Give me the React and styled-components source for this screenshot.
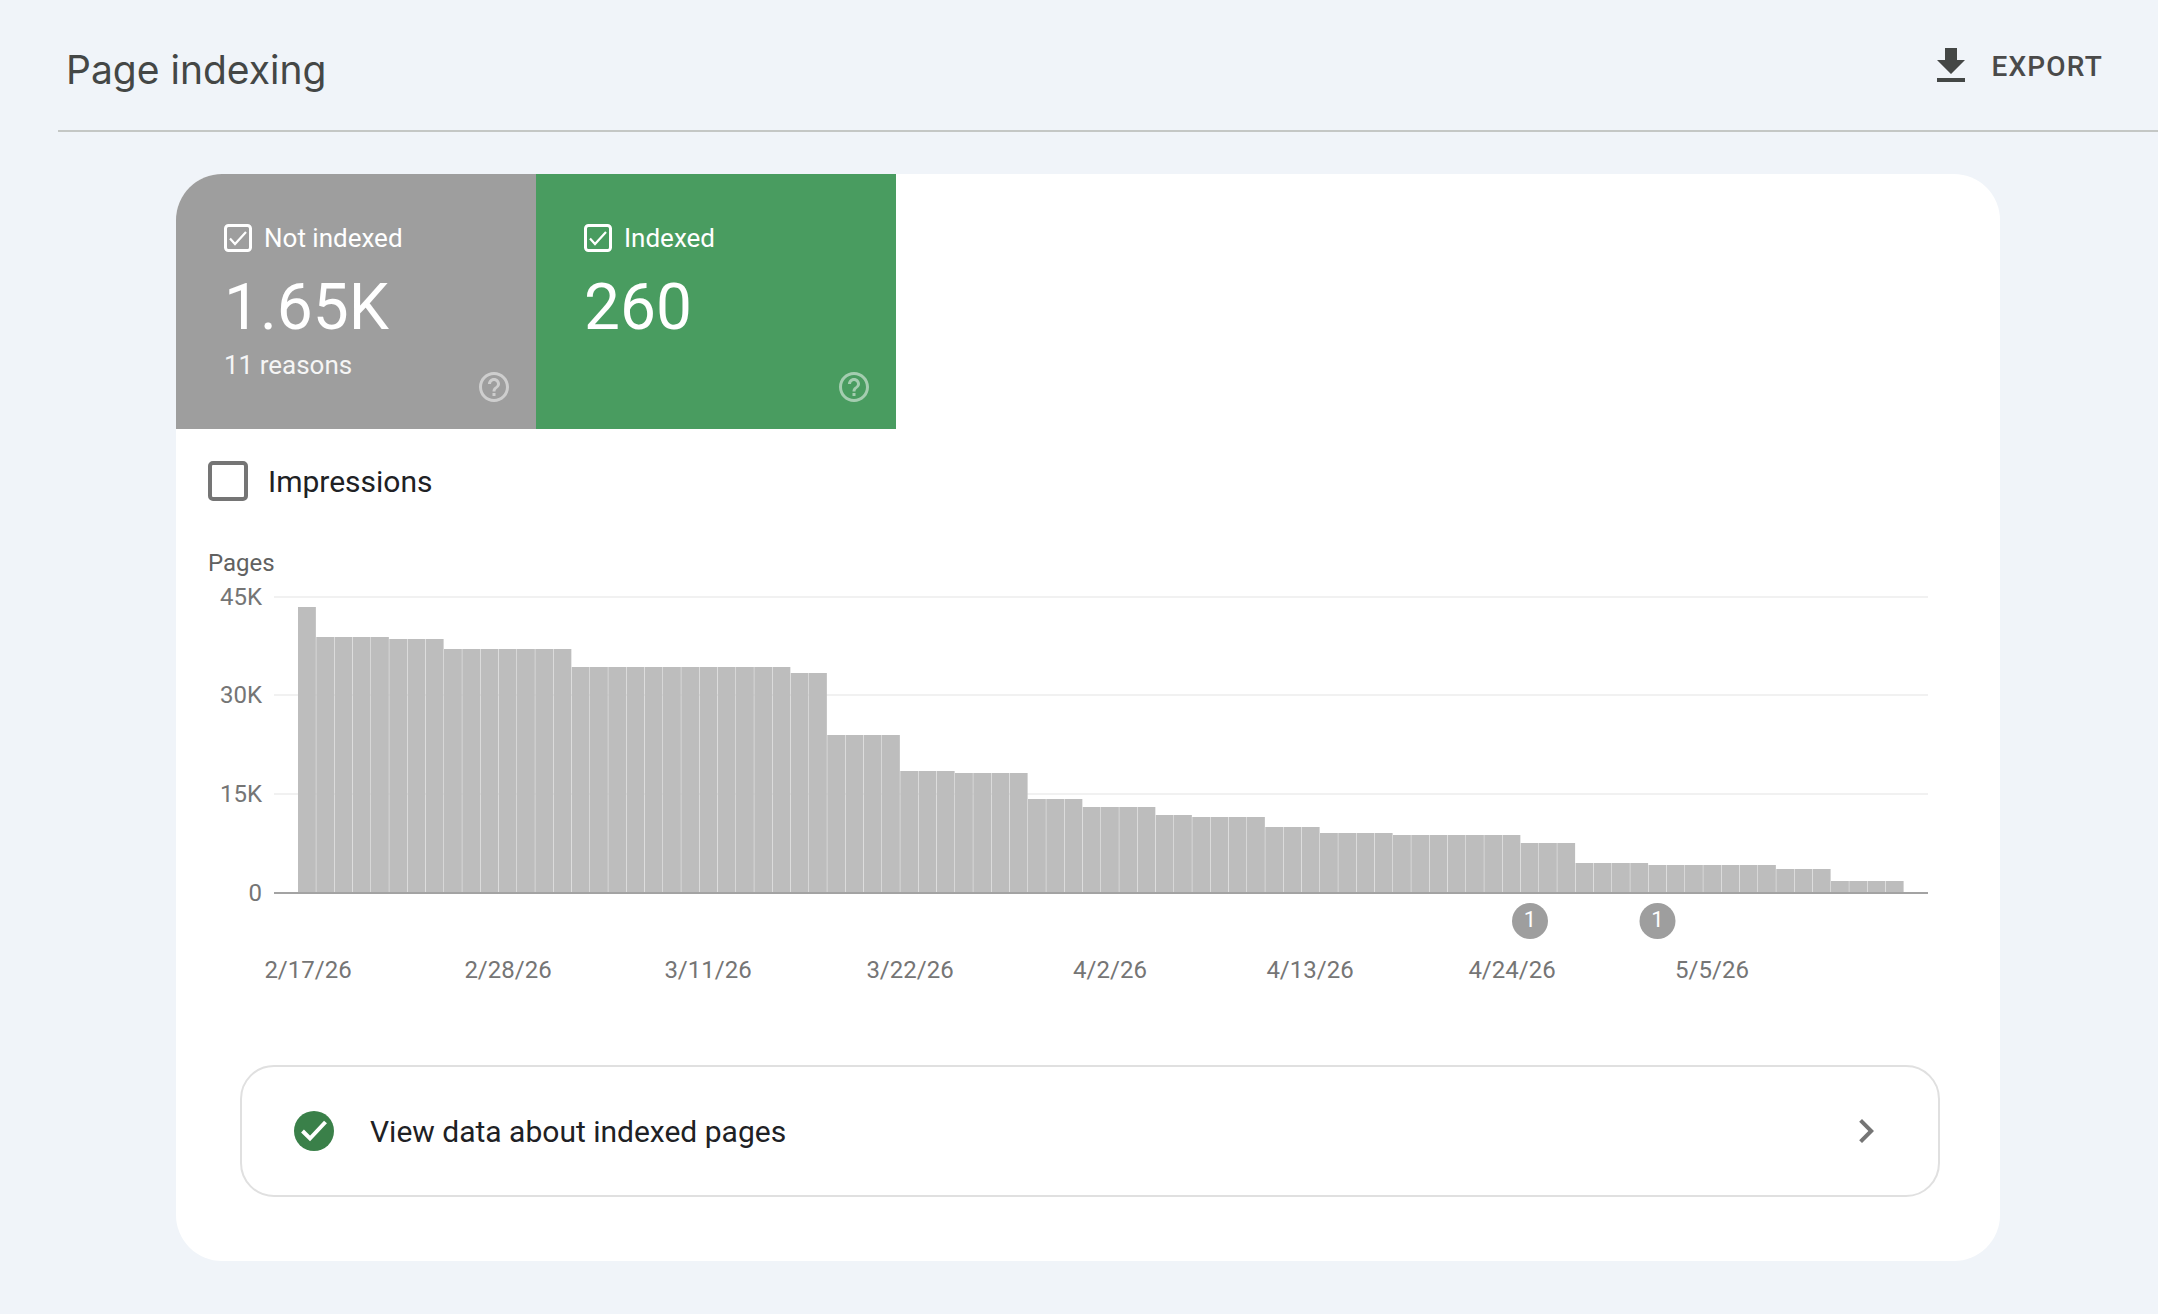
import styled, { createGlobalStyle } from "styled-components";

const GlobalStyle = createGlobalStyle`
  html, body {
    margin: 0;
    padding: 0;
    background: #f0f4f9;
    font-family: Roboto, "Liberation Sans", sans-serif;
  }
`;

// [number of days, y of bar top]
const barRuns = [
  [1, 607], [4, 637], [3, 639], [7, 649], [12, 667], [2, 673], [4, 735],
  [3, 771], [4, 773], [3, 799], [4, 807], [2, 815], [4, 817], [3, 827],
  [4, 833], [7, 835], [3, 843], [4, 863], [7, 865], [3, 869], [4, 881],
];
const bars = barRuns.flatMap(([n, top]) => Array(n).fill(top));

const BAR_LEFT = 298;
const BAR_STEP = 18.25;
const BASE_Y = 892;

const yTicks = [
  { label: "45K", y: 597 },
  { label: "30K", y: 695 },
  { label: "15K", y: 794 },
];
const xTicks = [
  { label: "2/17/26", x: 308 },
  { label: "2/28/26", x: 508 },
  { label: "3/11/26", x: 708 },
  { label: "3/22/26", x: 910 },
  { label: "4/2/26", x: 1110 },
  { label: "4/13/26", x: 1310 },
  { label: "4/24/26", x: 1512 },
  { label: "5/5/26", x: 1712 },
];
const pins = [1530, 1657.5];

const Page = styled.div`
  width: 2158px;
  height: 1314px;
  overflow: hidden;
`;

const Header = styled.header`
  height: 128px;
  margin-left: 58px;
  display: flex;
  align-items: center;
  justify-content: space-between;
  border-bottom: 2px solid #c4c7c5;
  padding: 2px 55px 0 8px;
  box-sizing: content-box;
`;

const Title = styled.h1`
  margin: 6px 0 0;
  font-family: Inter, Roboto, sans-serif;
  font-size: 39px;
  font-weight: 400;
  color: #444746;
`;

const ExportButton = styled.button`
  display: flex;
  align-items: center;
  gap: 16px;
  border: 0;
  background: none;
  padding: 0;
  font-family: Roboto, sans-serif;
  font-size: 28px;
  font-weight: 500;
  letter-spacing: 1.2px;
  color: #4a4a4a;
`;

const Card = styled.main`
  width: 1824px;
  height: 1087px;
  margin: 42px 0 0 176px;
  background: #fff;
  border-radius: 46px;
  overflow: hidden;
`;

const Tiles = styled.div`
  display: flex;
`;

const Tile = styled.div`
  position: relative;
  width: 360px;
  height: 255px;
  box-sizing: border-box;
  padding: 50px 0 0 48px;
  background: ${(props) => props.color};
  color: #fff;
`;

const TileLabel = styled.div`
  display: flex;
  align-items: center;
  gap: 12px;
  height: 28px;
  font-size: 26px;
`;

const TileValue = styled.div`
  margin-top: 20px;
  font-size: 64px;
  line-height: 72px;
`;

const TileNote = styled.div`
  margin-top: 6px;
  font-size: 26px;
  line-height: 30px;
  opacity: 0.9;
`;

const HelpIcon = styled.svg`
  position: absolute;
  right: 24px;
  bottom: 24px;
  width: 36px;
  height: 36px;
  fill: #fff;
  opacity: 0.5;
`;

const MetricRow = styled.label`
  display: flex;
  align-items: center;
  gap: 20px;
  margin: 32px 0 0 32px;
  height: 40px;
  font-size: 30px;
  color: #202124;
`;

const MetricBox = styled.span`
  width: 40px;
  height: 40px;
  box-sizing: border-box;
  border: 4px solid #757575;
  border-radius: 5px;
`;

const ChartSvg = styled.svg`
  display: block;
  width: 1824px;
  height: 460px;
  margin-top: 39px;
`;

const ChartText = styled.text`
  font-family: Roboto, sans-serif;
  font-size: 24px;
  fill: ${(props) => props.color || "#757575"};
`;

const PinText = styled.text`
  font-family: Roboto, sans-serif;
  font-size: 22px;
  fill: #fff;
`;

const LinkBox = styled.a`
  display: flex;
  align-items: center;
  width: 1700px;
  height: 132px;
  box-sizing: border-box;
  margin: 65px 0 0 64px;
  padding: 0 48px 0 52px;
  border: 2px solid #e0e0e0;
  border-radius: 34px;
  font-size: 30px;
  color: #202124;
`;

const LinkLabel = styled.span`
  flex: 1;
  margin-left: 36px;
`;

function TileCheck() {
  return (
    <svg width="28" height="28" viewBox="0 0 28 28" fill="none" stroke="#fff">
      <rect x="1.5" y="1.5" width="25" height="25" rx="3" strokeWidth="3" />
      <path d="M6 14.5l5 5.5 11-12" strokeWidth="2.2" />
    </svg>
  );
}

function Help() {
  return (
    <HelpIcon viewBox="0 0 24 24">
      <path d="M11 18h2v-2h-2v2zm1-16C6.48 2 2 6.48 2 12s4.48 10 10 10 10-4.48 10-10S17.52 2 12 2zm0 18c-4.41 0-8-3.59-8-8s3.59-8 8-8 8 3.59 8 8-3.59 8-8 8zm0-14c-2.21 0-4 1.79-4 4h2c0-1.1.9-2 2-2s2 .9 2 2c0 2-3 1.75-3 5h2c0-2.25 3-2.5 3-5 0-2.21-1.79-4-4-4z" />
    </HelpIcon>
  );
}

function Chart() {
  return (
    <ChartSvg viewBox="176 540 1824 460">
      <ChartText x="208" y="571" color="#616161">Pages</ChartText>
      {yTicks.map((t) => (
        <g key={t.label}>
          <rect x="274" y={t.y - 1} width="1654" height="2" fill="#f1f1f1" />
          <ChartText x="262" y={t.y + 8} textAnchor="end">{t.label}</ChartText>
        </g>
      ))}
      <ChartText x="262" y="901" textAnchor="end">0</ChartText>
      {bars.map((top, i) => (
        <rect
          key={i}
          x={BAR_LEFT + i * BAR_STEP}
          y={top}
          width={BAR_STEP - 0.4}
          height={BASE_Y - top}
          fill="#bdbdbd"
        />
      ))}
      <rect x="274" y="892" width="1654" height="2" fill="#a3a3a3" />
      {pins.map((x) => (
        <g key={x}>
          <circle cx={x} cy="921" r="18" fill="#9e9e9e" />
          <PinText x={x} y="927" textAnchor="middle">1</PinText>
        </g>
      ))}
      {xTicks.map((t) => (
        <ChartText key={t.label} x={t.x} y="978" textAnchor="middle">{t.label}</ChartText>
      ))}
    </ChartSvg>
  );
}

export default function App() {
  return (
    <Page>
      <GlobalStyle />
      <Header>
        <Title>Page indexing</Title>
        <ExportButton>
          <svg width="48" height="48" viewBox="0 0 24 24" fill="#444746">
            <path d="M19 9h-4V3H9v6H5l7 7 7-7zM5 18v2h14v-2H5z" />
          </svg>
          EXPORT
        </ExportButton>
      </Header>
      <Card>
        <Tiles>
          <Tile color="#9e9e9e">
            <TileLabel><TileCheck />Not indexed</TileLabel>
            <TileValue>1.65K</TileValue>
            <TileNote>11 reasons</TileNote>
            <Help />
          </Tile>
          <Tile color="#499c60">
            <TileLabel><TileCheck />Indexed</TileLabel>
            <TileValue>260</TileValue>
            <Help />
          </Tile>
        </Tiles>
        <MetricRow><MetricBox />Impressions</MetricRow>
        <Chart />
        <LinkBox>
          <svg width="40" height="40" viewBox="0 0 40 40">
            <circle cx="20" cy="20" r="20" fill="#3a8049" />
            <path d="M8.5 20l7.5 7.5L31.5 11" fill="none" stroke="#fff" strokeWidth="4" />
          </svg>
          <LinkLabel>View data about indexed pages</LinkLabel>
          <svg width="48" height="48" viewBox="0 0 24 24" fill="#757575">
            <path d="M10 6L8.59 7.41 13.17 12l-4.58 4.59L10 18l6-6z" />
          </svg>
        </LinkBox>
      </Card>
    </Page>
  );
}
